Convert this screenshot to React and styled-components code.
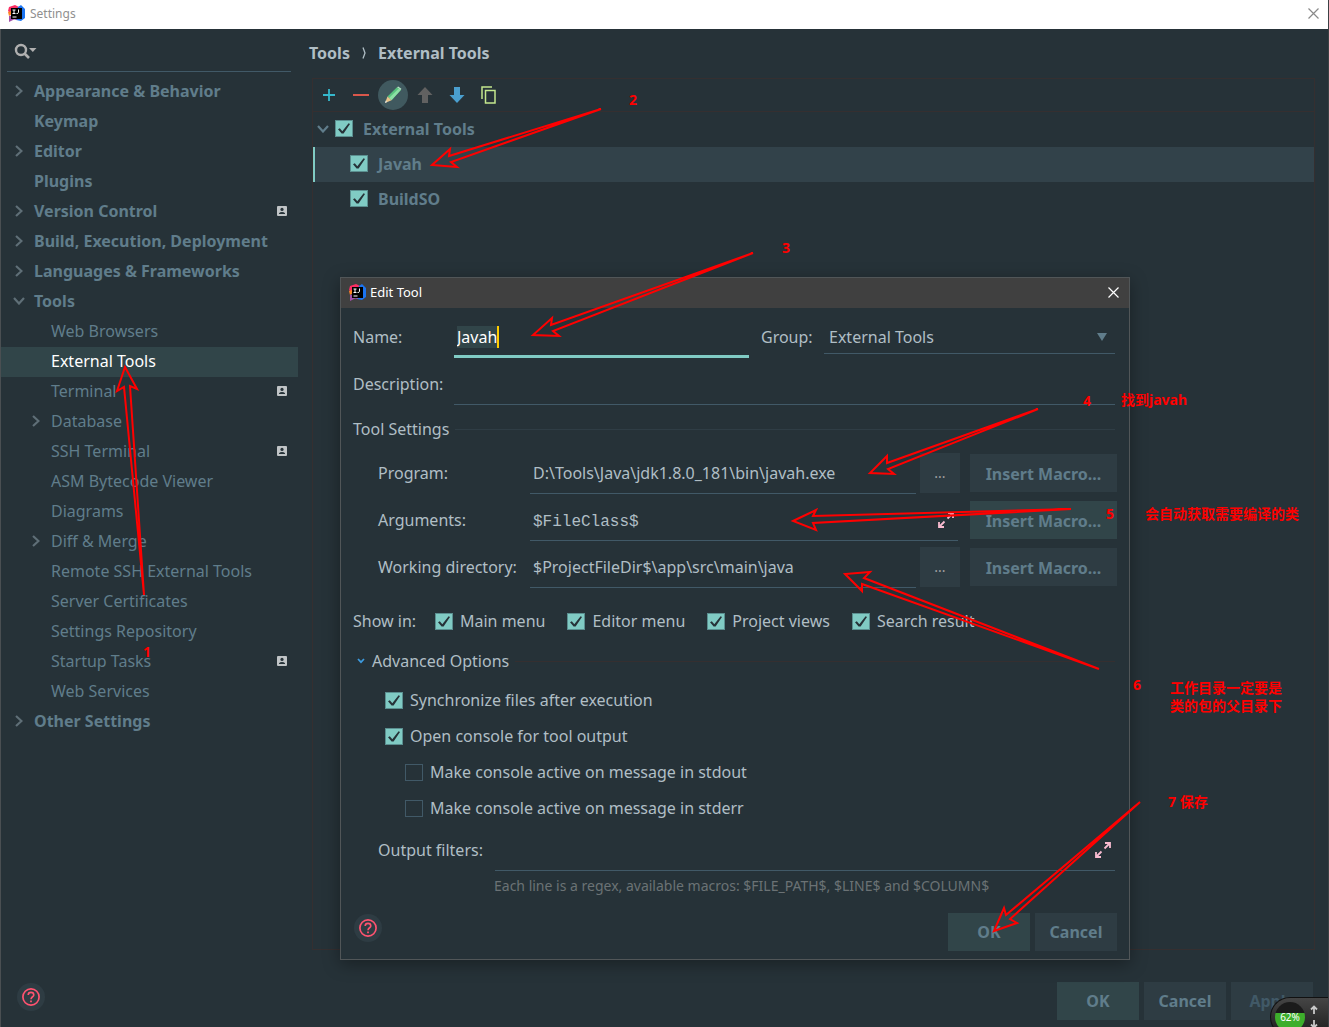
import React, {useState} from 'react';
import styled, {createGlobalStyle, css} from 'styled-components';

const colors = {
  bg: '#263238',
  text: '#b0bec5',
  muted: '#607d8b',
  line: '#415967',
  faint: '#2f3d45',
  warmLine: '#352f30',
  accent: '#80cbc4',
  button: '#2e3c43',
  primary: '#314549',
  note: '#ff0000',
};

const checkMark = `url("data:image/svg+xml,%3Csvg xmlns='http://www.w3.org/2000/svg' viewBox='0 0 16 15'%3E%3Cpath d='M2 8.2L3.8 7.2L6.3 10.2L12.6 2.2L14 3L7.6 12.6H5.6Z' fill='%23263238'/%3E%3C/svg%3E")`;
const selectArrow = `url("data:image/svg+xml,%3Csvg xmlns='http://www.w3.org/2000/svg' viewBox='0 0 10 8'%3E%3Cpath d='M0 0H10L5 8Z' fill='%23607d8b'/%3E%3C/svg%3E")`;

const GlobalStyle = createGlobalStyle`
  * {
    box-sizing: border-box;
  }
  body {
    margin: 0;
    background-color: ${colors.bg};
    color: ${colors.text};
    font: 16px/22px "Noto Sans", "Noto Sans CJK SC", sans-serif;
  }
  button, input, select {
    margin: 0;
    padding: 0;
    border: none;
    border-radius: 0;
    background: none;
    color: inherit;
    font: inherit;
    outline: none;
  }
  button {
    cursor: pointer;
  }
  a {
    color: inherit;
    text-decoration: none;
  }
  svg {
    display: block;
    flex: none;
  }
`;

/* main window */

const Page = styled.div`
  position: relative;
  display: flex;
  flex-direction: column;
  min-height: 100vh;
  overflow: hidden;
  border-right: 1px solid #3c4144;
`;

const TitleBar = styled.header`
  display: flex;
  align-items: center;
  gap: ${props => props.dark ? 4 : 5}px;
  height: ${props => props.dark ? 30 : 29}px;
  padding: 0 ${props => props.dark ? 10 : 9}px 2px 8px;
  background-color: ${props => props.dark ? '#404040' : '#ffffff'};
  color: ${props => props.dark ? '#ffffff' : '#8f8f8f'};
  font-size: ${props => props.dark ? 13 : 12}px;
`;

const CloseButton = styled.button`
  margin-left: auto;
`;

const Body = styled.div`
  flex: 1;
  display: flex;
`;

const Sidebar = styled.aside`
  flex: none;
  width: 298px;
  border-left: 1px solid #4a4f52;
`;

const SearchBar = styled.div`
  display: flex;
  align-items: center;
  height: 43px;
  margin: 0 7px 5px 6px;
  padding: 3px 7px 0;
  border-bottom: 1px solid ${colors.line};

  input {
    flex: 1;
    min-width: 0;
  }
`;

const NavItem = styled.a`
  display: flex;
  align-items: center;
  height: 30px;
  padding: 0 11px 2px ${props => props.level === 2 ? 27 : 10}px;
  color: ${colors.muted};
  font-weight: ${props => props.level === 2 ? 400 : 700};
  ${props => props.active && css`
    background-color: ${colors.primary};
    color: #ffffff;
  `}
`;

const NavChevron = styled.span`
  display: flex;
  justify-content: center;
  flex: none;
  width: 16px;
  margin-right: 7px;
  color: #5f6f77;
`;

const NavLabel = styled.span`
  flex: 1;
`;

const Main = styled.main`
  flex: 1;
  display: flex;
  flex-direction: column;
  min-width: 0;
  padding: 13px 13px 0 11px;
`;

const Breadcrumb = styled.h1`
  display: flex;
  align-items: center;
  gap: 12px;
  margin: 0 0 14px;
  font-size: 16px;
  line-height: 22px;
`;

const Panel = styled.section`
  flex: 1;
  margin-left: 3px;
  border: 1px solid ${colors.warmLine};
`;

const Toolbar = styled.div`
  display: flex;
  height: 33px;
  border-bottom: 1px solid ${colors.warmLine};
`;

const ToolButton = styled.button`
  display: flex;
  align-items: center;
  justify-content: center;
  width: 32px;
  height: 32px;
`;

const RoundIcon = styled.span`
  display: flex;
  align-items: center;
  justify-content: center;
  flex: none;
  width: 30px;
  height: 30px;
  border-radius: 50%;
  background-color: #40595f;
`;

const TreeRow = styled.label`
  display: flex;
  align-items: center;
  gap: 10px;
  height: 35px;
  padding: 0 0 2px ${props => props.indent}px;
  border-left: 2px solid transparent;
  color: ${colors.muted};
  font-weight: 700;
  ${props => props.active && css`
    border-left-color: ${colors.accent};
    background-color: #32424a;
  `}
`;

const TreeToggle = styled.span`
  width: 8px;
`;

const Footer = styled.footer`
  display: flex;
  align-items: flex-start;
  gap: 5px;
  ${props => props.inDialog ? css`
    padding: 17px 0 8px;
  ` : css`
    padding: 32px 15px 7px;
    border-left: 1px solid #4a4f52;
  `}
`;

const HelpButton = styled.button`
  display: flex;
  align-items: center;
  justify-content: center;
  width: 28px;
  height: 28px;
  margin: 1px auto 0 1px;
  border-radius: 50%;
  background-color: ${colors.button};
`;

const Button = styled.button`
  flex: none;
  width: ${props => props.wide ? 147 : 82}px;
  height: 38px;
  background-color: ${props => props.primary ? colors.primary : colors.button};
  color: ${colors.muted};
  font-weight: 700;
  &:disabled {
    color: #415967;
  }
`;

/* dialog */

const Dialog = styled.div`
  position: absolute;
  top: 277px;
  left: 340px;
  width: 790px;
  border: 1px solid #515658;
  background-color: ${colors.bg};
  box-shadow: 0 4px 16px rgba(0, 0, 0, 0.35);
`;

const DialogBody = styled.form`
  padding: 12px 12px 0;
`;

const Row = styled.div`
  display: flex;
  height: 38px;
  margin: 0 2px 9px 0;
  line-height: 34px;
`;

const Label = styled.label`
  flex: none;
  width: ${props => props.width}px;
`;

const Input = styled.input`
  flex: 1;
  min-width: 0;
  padding-left: 3px;
  border-bottom: 1px solid ${colors.line};
`;

const NameField = styled.div`
  display: flex;
  align-items: center;
  flex: none;
  width: 295px;
  margin-right: 12px;
  padding: 0 0 2px 3px;
  border-bottom: 3px solid ${colors.accent};

  input {
    height: 22px;
    field-sizing: content;
    background-color: ${colors.primary};
    color: #ffffff;
  }
`;

const Caret = styled.span`
  width: 2px;
  height: 22px;
  background-color: #ffcc00;
`;

const Select = styled.select`
  flex: 1;
  height: 34px;
  padding-left: 5px;
  border-bottom: 1px solid ${colors.line};
  appearance: none;
  background: ${selectArrow} right 8px center / 10px 8px no-repeat;
`;

const SectionTitle = styled.div`
  display: flex;
  align-items: center;
  gap: 6px;
  margin: 13px 2px 13px 0;

  &::after {
    content: '';
    flex: 1;
    height: 1px;
    background-color: ${props => props.warm ? colors.warmLine : colors.faint};
  }
`;

const Disclosure = styled.button`
  display: flex;
  align-items: center;
  gap: 7px;
  padding-left: 4px;
`;

const SettingRow = styled.div`
  display: flex;
  height: 41px;
  margin: 0 0 6px 25px;
  line-height: 40px;
`;

const InputFrame = styled.div`
  flex: 1;
  display: flex;
  align-items: center;
  min-width: 0;
  padding: 0 4px 0 3px;
  border-bottom: 1px solid ${colors.line};

  input {
    flex: 1;
    min-width: 0;
    ${props => props.mono && css`
      padding-top: 3px;
      font-family: "Liberation Mono", monospace;
    `}
  }
`;

const BrowseButton = styled.button`
  flex: none;
  width: 40px;
  height: 40px;
  margin-left: 4px;
  background-color: ${colors.button};
  color: #a0a0a0;
  font-size: 14px;
`;

const MacroCell = styled.div`
  display: flex;
  align-items: center;
  height: 40px;
  margin-left: ${props => props.gap}px;

  button {
    padding-bottom: 2px;
  }
`;

const ShowIn = styled.div`
  display: flex;
  align-items: center;
  height: 30px;
  margin: 18px 0 14px;
`;

const CheckGroup = styled.div`
  display: flex;
  gap: 22px;
`;

const CheckLabel = styled.label`
  display: flex;
  align-items: center;
  gap: 7px;
`;

const OptionList = styled.div`
  margin: -3px 0 7px;

  ${CheckLabel} {
    height: 36px;
  }
`;

const Indent = styled.div`
  padding-left: ${props => props.size}px;
`;

const Checkbox = styled.input.attrs({type: 'checkbox'})`
  appearance: none;
  flex: none;
  width: 18px;
  height: 17px;
  border: 1px solid ${colors.line};
  &:checked {
    border-color: #5b8f90;
    background: ${colors.accent} ${checkMark} center / 16px 15px no-repeat;
  }
`;

const OutputRow = styled(Row)`
  margin: 0 2px 5px 25px;

  button {
    padding-bottom: 3px;
  }
`;

const Hint = styled.p`
  margin: 0 0 0 141px;
  color: #6b7275;
  font-size: 14px;
  line-height: 20px;
`;

/* notes drawn over the window */

const Arrows = styled.svg`
  position: absolute;
  top: 0;
  left: 0;
  width: 1329px;
  height: 1027px;
  pointer-events: none;
`;

const Note = styled.div`
  position: absolute;
  top: ${props => props.y}px;
  left: ${props => props.x}px;
  color: ${colors.note};
  font-size: 14px;
  font-weight: 700;
  line-height: 18px;
  white-space: pre;
`;

const Monitor = styled.div`
  position: absolute;
  right: 0;
  bottom: -10px;
  display: flex;
  align-items: center;
  gap: 5px;
  width: 58px;
  height: 40px;
  padding-left: 4px;
  border: 1px solid #111111;
  border-right: none;
  border-radius: 20px 0 0 20px;
  background: linear-gradient(#454545, #1c1c1c);
`;

const Gauge = styled.div`
  width: 30px;
  height: 30px;
  border-radius: 50%;
  background: linear-gradient(#1b1b1b 38%, #3dae2b 38%);
  color: #ffffff;
  font-size: 10px;
  line-height: 30px;
  text-align: center;
`;

const Logo = () => (
  <svg width="17" height="17" viewBox="0 0 17 17">
    <path d="M1 2L7 0L11 2L10 6L3 9L0 6Z" fill="#fc2d62" />
    <path d="M0 7L3 6L4 9L1 11Z" fill="#fd8424" />
    <path d="M10 2L13 0L17 4V13L13 16L8 15L7 9Z" fill="#1b74f2" />
    <path d="M1 11L8 10L9 15L6 14.5L1 17Z" fill="#a14fa8" />
    <path d="M3 3H14V14H3Z" fill="#000000" />
    <path d="M4.5 5H7.5M6 5V8.5M4.5 8.5H7.5M10.5 4.5V7.5Q10.5 8.5 8.5 8.5M4.5 12H8.5" stroke="#ffffff" fill="none" />
  </svg>
);

const Cross = ({color}) => (
  <svg width="11" height="11" viewBox="0 0 11 11">
    <path d="M0.5 0.5L10.5 10.5M10.5 0.5L0.5 10.5" stroke={color} strokeWidth="1.2" />
  </svg>
);

const Chevron = ({open}) => (
  open
    ? <svg width="12" height="8" viewBox="0 0 12 8"><path d="M1 1L6 6.5L11 1" stroke="currentColor" strokeWidth="2.2" fill="none" /></svg>
    : <svg width="8" height="12" viewBox="0 0 8 12"><path d="M1 1L6.5 6L1 11" stroke="currentColor" strokeWidth="2.2" fill="none" /></svg>
);

const SearchIcon = () => (
  <svg width="23" height="17" viewBox="0 0 23 17">
    <circle cx="7" cy="7" r="5" stroke="#b0b0b0" strokeWidth="2.4" fill="none" />
    <path d="M10.5 10.5L15 15" stroke="#b0b0b0" strokeWidth="2.6" />
    <path d="M15 5H22.5L18.8 9Z" fill="#b0b0b0" />
  </svg>
);

const Badge = () => (
  <svg width="10" height="10" viewBox="0 0 10 10">
    <rect width="10" height="10" rx="1" fill="#c0c4c6" />
    <circle cx="5" cy="3.4" r="1.6" fill={colors.bg} />
    <path d="M2 8V7.2Q3 6 5 6T8 7.2V8Z" fill={colors.bg} />
  </svg>
);

const HelpIcon = () => (
  <svg width="18" height="18" viewBox="0 0 18 18" fill="none" stroke="#ff5370">
    <circle cx="9" cy="9" r="8.1" strokeWidth="1.7" />
    <path d="M6.2 7Q6.2 4.4 9 4.4T11.8 7C11.8 8.7 9 8.9 9 11.2" strokeWidth="1.6" />
    <path d="M8.1 13.3H9.9" strokeWidth="1.7" />
  </svg>
);

const ExpandIcon = () => (
  <svg width="16" height="16" viewBox="0 0 16 16" fill="none" stroke="#f8bbd0" strokeWidth="1.8">
    <path d="M10 1H15V6M15 1L9.5 6.5" />
    <path d="M1 10V15H6M1 15L6.5 9.5" />
  </svg>
);

const PlusIcon = () => (
  <svg width="12" height="12" viewBox="0 0 12 12"><path d="M6 0V12M0 6H12" stroke="#35b8cc" strokeWidth="1.8" /></svg>
);

const MinusIcon = () => (
  <svg width="16" height="12" viewBox="0 0 16 12"><path d="M0 6H16" stroke="#d9574b" strokeWidth="2" /></svg>
);

const PencilIcon = () => (
  <svg width="18" height="18" viewBox="0 0 18 18">
    <path d="M3.5 10.5L13 1.2L16.8 4L7.5 14.2Z" fill="#59c37f" />
    <path d="M5 12L14.8 2.5L16.8 4L7.5 14.2Z" fill="#8be0a4" />
    <path d="M13 1.2L14.2 0.4L17.4 2.8L16.8 4Z" fill="#b7e5c6" />
    <path d="M3.5 10.5L7.5 14.2L1 17Z" fill="#e8c58c" />
    <path d="M1.8 14.6L3.2 16L1 17Z" fill="#dfe7ea" />
  </svg>
);

const ArrowIcon = ({down, color}) => (
  <svg width="16" height="16" viewBox="0 0 16 16">
    <path d={down ? 'M5 0H11V8H15.5L8 16L0.5 8H5Z' : 'M5 16H11V8H15.5L8 0L0.5 8H5Z'} fill={color} />
  </svg>
);

const CopyIcon = () => (
  <svg width="16" height="18" viewBox="0 0 16 18" fill="none" stroke="#c3e88d" strokeWidth="1.5">
    <path d="M1 13V1H11" />
    <path d="M4.5 4.5H14V17H4.5Z" />
  </svg>
);

const navItems = [
  {label: 'Appearance & Behavior', chevron: true},
  {label: 'Keymap'},
  {label: 'Editor', chevron: true},
  {label: 'Plugins'},
  {label: 'Version Control', chevron: true, badge: true},
  {label: 'Build, Execution, Deployment', chevron: true},
  {label: 'Languages & Frameworks', chevron: true},
  {label: 'Tools', chevron: true, open: true},
  {label: 'Web Browsers', level: 2},
  {label: 'External Tools', level: 2, active: true},
  {label: 'Terminal', level: 2, badge: true},
  {label: 'Database', level: 2, chevron: true},
  {label: 'SSH Terminal', level: 2, badge: true},
  {label: 'ASM Bytecode Viewer', level: 2},
  {label: 'Diagrams', level: 2},
  {label: 'Diff & Merge', level: 2, chevron: true},
  {label: 'Remote SSH External Tools', level: 2},
  {label: 'Server Certificates', level: 2},
  {label: 'Settings Repository', level: 2},
  {label: 'Startup Tasks', level: 2, badge: true},
  {label: 'Web Services', level: 2},
  {label: 'Other Settings', chevron: true},
];

const showInItems = ['Main menu', 'Editor menu', 'Project views', 'Search result'];

const arrows = [
  '144,595 124,387 117,391 125,367 137,389 130,386',
  '601,109 449,156 450,149 432,165 457,167 451,162',
  '753,253 551,325 552,318 533,335 559,336 553,331',
  '1038,409 887,463 887,456 870,473 894,474 888,469',
  '1071,509 813,516 816,510 793,521 816,530 813,523',
  '1099,669 864,578 870,572 845,574 862,591 862,584',
  '1140,802 1006,915 1004,908 994,931 1017,923 1010,919',
];

const notes = [
  {x: 143, y: 643, text: '1'},
  {x: 629, y: 91, text: '2'},
  {x: 782, y: 239, text: '3'},
  {x: 1083, y: 392, text: '4'},
  {x: 1121, y: 391, text: '找到javah'},
  {x: 1106, y: 505, text: '5'},
  {x: 1145, y: 505, text: '会自动获取需要编译的类'},
  {x: 1133, y: 676, text: '6'},
  {x: 1170, y: 679, text: '工作目录一定要是\n类的包的父目录下'},
  {x: 1168, y: 793, text: '7 保存'},
];

const EditTool = () => {
  const [name, setName] = useState('Javah');

  return (
    <Dialog role="dialog" aria-label="Edit Tool">
      <TitleBar dark>
        <Logo />
        <span>Edit Tool</span>
        <CloseButton aria-label="Close dialog"><Cross color="#ffffff" /></CloseButton>
      </TitleBar>
      <DialogBody onSubmit={e => e.preventDefault()}>
        <Row>
          <Label htmlFor="name" width={101}>Name:</Label>
          <NameField>
            <input id="name" value={name} onChange={e => setName(e.target.value)} />
            <Caret />
          </NameField>
          <Label htmlFor="group" width={63}>Group:</Label>
          <Select id="group">
            <option>External Tools</option>
          </Select>
        </Row>
        <Row>
          <Label htmlFor="description" width={101}>Description:</Label>
          <Input id="description" />
        </Row>
        <SectionTitle>Tool Settings</SectionTitle>
        <SettingRow>
          <Label htmlFor="program" width={152}>Program:</Label>
          <InputFrame>
            <input id="program" defaultValue="D:\Tools\Java\jdk1.8.0_181\bin\javah.exe" />
          </InputFrame>
          <BrowseButton type="button" aria-label="Browse program">...</BrowseButton>
          <MacroCell gap={10}><Button type="button" wide>Insert Macro...</Button></MacroCell>
        </SettingRow>
        <SettingRow>
          <Label htmlFor="arguments" width={152}>Arguments:</Label>
          <InputFrame mono>
            <input id="arguments" defaultValue="$FileClass$" />
            <button type="button" aria-label="Expand arguments"><ExpandIcon /></button>
          </InputFrame>
          <MacroCell gap={12}><Button type="button" wide primary>Insert Macro...</Button></MacroCell>
        </SettingRow>
        <SettingRow>
          <Label htmlFor="directory" width={152}>Working directory:</Label>
          <InputFrame>
            <input id="directory" defaultValue="$ProjectFileDir$\app\src\main\java" />
          </InputFrame>
          <BrowseButton type="button" aria-label="Browse directory">...</BrowseButton>
          <MacroCell gap={10}><Button type="button" wide>Insert Macro...</Button></MacroCell>
        </SettingRow>
        <ShowIn>
          <Label as="span" width={82}>Show in:</Label>
          <CheckGroup>
            {showInItems.map(item => (
              <CheckLabel key={item}>
                <Checkbox defaultChecked />
                {item}
              </CheckLabel>
            ))}
          </CheckGroup>
        </ShowIn>
        <SectionTitle warm>
          <Disclosure type="button">
            <svg width="8" height="6" viewBox="0 0 8 6">
              <path d="M1 1L4 4.2L7 1" stroke="#3d9be0" strokeWidth="1.7" fill="none" />
            </svg>
            Advanced Options
          </Disclosure>
        </SectionTitle>
        <OptionList>
          <Indent size={32}>
            <CheckLabel><Checkbox defaultChecked />Synchronize files after execution</CheckLabel>
            <CheckLabel><Checkbox defaultChecked />Open console for tool output</CheckLabel>
            <Indent size={20}>
              <CheckLabel><Checkbox />Make console active on message in stdout</CheckLabel>
              <CheckLabel><Checkbox />Make console active on message in stderr</CheckLabel>
            </Indent>
          </Indent>
        </OptionList>
        <OutputRow>
          <Label htmlFor="filters" width={117}>Output filters:</Label>
          <InputFrame>
            <input id="filters" />
            <button type="button" aria-label="Expand filters"><ExpandIcon /></button>
          </InputFrame>
        </OutputRow>
        <Hint>Each line is a regex, available macros: $FILE_PATH$, $LINE$ and $COLUMN$</Hint>
        <Footer as="div" inDialog>
          <HelpButton type="button" aria-label="Dialog help"><HelpIcon /></HelpButton>
          <Button primary>OK</Button>
          <Button type="button">Cancel</Button>
        </Footer>
      </DialogBody>
    </Dialog>
  );
};

const App = () => (
  <Page>
    <GlobalStyle />
    <TitleBar>
      <Logo />
      <span>Settings</span>
      <CloseButton aria-label="Close"><Cross color="#8a8a8a" /></CloseButton>
    </TitleBar>
    <Body>
      <Sidebar>
        <SearchBar>
          <SearchIcon />
          <input aria-label="Search settings" />
        </SearchBar>
        <nav>
          {navItems.map(item => (
            <NavItem key={item.label} href="#" level={item.level} active={item.active}>
              <NavChevron>{item.chevron && <Chevron open={item.open} />}</NavChevron>
              <NavLabel>{item.label}</NavLabel>
              {item.badge && <Badge />}
            </NavItem>
          ))}
        </nav>
      </Sidebar>
      <Main>
        <Breadcrumb>
          <span>Tools</span>
          <svg width="4" height="12" viewBox="0 0 4 12"><path d="M1 0.5L3 6L1 11.5" stroke="currentColor" strokeWidth="1.3" fill="none" /></svg>
          <span>External Tools</span>
        </Breadcrumb>
        <Panel>
          <Toolbar>
            <ToolButton aria-label="Add"><PlusIcon /></ToolButton>
            <ToolButton aria-label="Remove"><MinusIcon /></ToolButton>
            <ToolButton aria-label="Edit"><RoundIcon><PencilIcon /></RoundIcon></ToolButton>
            <ToolButton aria-label="Move up"><ArrowIcon color="#616161" /></ToolButton>
            <ToolButton aria-label="Move down"><ArrowIcon down color="#4a9fcf" /></ToolButton>
            <ToolButton aria-label="Copy"><CopyIcon /></ToolButton>
          </Toolbar>
          <TreeRow indent={2}>
            <TreeToggle><Chevron open /></TreeToggle>
            <Checkbox defaultChecked />
            External Tools
          </TreeRow>
          <TreeRow indent={35} active><Checkbox defaultChecked />Javah</TreeRow>
          <TreeRow indent={35}><Checkbox defaultChecked />BuildSO</TreeRow>
        </Panel>
      </Main>
    </Body>
    <Footer>
      <HelpButton aria-label="Help"><HelpIcon /></HelpButton>
      <Button primary>OK</Button>
      <Button>Cancel</Button>
      <Button disabled>Apply</Button>
    </Footer>
    <EditTool />
    <Arrows viewBox="0 0 1329 1027">
      {arrows.map(points => (
        <polygon key={points} points={points} fill="none" stroke={colors.note} strokeWidth="2" />
      ))}
    </Arrows>
    {notes.map(({x, y, text}) => (
      <Note key={text} x={x} y={y}>{text}</Note>
    ))}
    <Monitor>
      <Gauge>62%</Gauge>
      <svg width="8" height="24" viewBox="0 0 8 24" fill="none" stroke="#c8c8c8" strokeWidth="1.8">
        <path d="M4 9V2M1 4.5L4 1.5L7 4.5" />
        <path d="M4 15V22M1 19.5L4 22.5L7 19.5" />
      </svg>
    </Monitor>
  </Page>
);

export default App;
